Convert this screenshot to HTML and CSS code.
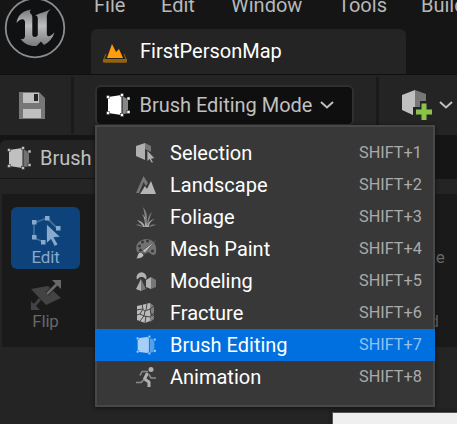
FILE: index.html
```
<!DOCTYPE html>
<html lang="en">
<head>
<meta charset="utf-8">
<title>FirstPersonMap</title>
<link rel="stylesheet" href="styles.css">
</head>
<body>
<svg width="0" height="0" class="defs">
  <defs>
    <linearGradient id="metal" x1="0" y1="0" x2="0" y2="1">
      <stop offset="0" stop-color="#77797b"/><stop offset=".45" stop-color="#bcbec0"/><stop offset="1" stop-color="#77797b"/>
    </linearGradient>
    <symbol id="brush" viewBox="0 0 24 24">
      <path d="M2 4 15.500 2v20L2 20z" fill="currentColor"/>
      <path d="M16.500 3.500 22 6v14l-5.500 1.500z" fill="currentColor" opacity=".5"/>
      <g fill="currentColor" class="knots">
        <rect x=".5" y="2.500" width="3" height="3"/><rect x="14.500" y=".5" width="3" height="3"/>
        <rect x="21" y="4" width="3" height="3"/><rect x=".5" y="18.500" width="3" height="3"/>
        <rect x="14.500" y="20.500" width="3" height="3"/><rect x="21" y="17.500" width="3" height="3"/>
      </g>
    </symbol>
    <symbol id="chevron" viewBox="0 0 14 8"><path d="m1 1 6 5.500L13 1" fill="none" stroke="currentColor" stroke-width="2"/></symbol>
  </defs>
</svg>
<div class="app">
  <header class="titlebar">
    <svg class="logo" viewBox="0 0 62 62">
      <circle cx="31" cy="31" r="29.300" fill="#101112" stroke="#8b8d8f" stroke-width="1.800"/>
      <path d="M12.500 26C13.500 18 19 14 27 12.500c-1.500 1.500-1.500 3 0 4.500 1 1 1.300 2 1.300 3.500V37c0 2 .7 3 2.500 3 1.500 0 2.500-.8 3-2V21.500c0-2-.8-2.800-2.500-3 4-2.500 9-3 15.500-6.500-3 3-4 5-4 8v16c0 2.500.8 3.500 2.200 3.200 1.800-.4 3.500-1.700 5.500-3.700-2 6-5.500 10-10.500 12.500l-3-3.500-4.500 4.500c-6.500.5-12-2-16-7 3 .5 4.500-.5 4.500-3V25.500c0-2-.7-3.300-2.500-3.300-2.200 0-4.200 1.600-6 3.800z" fill="url(#metal)"/>
    </svg>
    <div class="titlecol">
      <nav class="menubar"><span class="m-file">File</span><span class="m-edit">Edit</span><span class="m-window">Window</span><span class="m-tools">Tools</span><span class="m-build">Build</span></nav>
      <div class="maptab">
        <svg width="24" height="20" viewBox="0 0 24 20"><path d="M4 15 9 1l4 8 3-3 4 9z" fill="#ff9d0a"/><path d="M3 11 1 16v3h22v-3l-2-5" fill="none" stroke="#94620f" stroke-width="1"/><path d="M0 16h24v3.500H0z" fill="#94620f"/></svg>
        <span>FirstPersonMap</span>
      </div>
    </div>
  </header>
  <section class="toolbar">
    <svg class="save" width="26" height="27" viewBox="0 0 26 27"><path d="M0 0h20l6 6v21H0z" fill="#777"/><path d="M4 1h16v10H4zM4 17h18v9H4z" fill="#c0c0c0"/><path d="M15 2h4v7h-4z" fill="#242424"/></svg>
    <i class="rule rule-a"></i>
    <button class="mode"><svg class="white" width="24" height="24"><use href="#brush"/></svg><span>Brush Editing Mode</span><svg width="14" height="8"><use href="#chevron"/></svg></button>
    <i class="rule rule-b"></i>
    <svg class="add" width="31" height="31" viewBox="0 0 31 31"><path d="M0 5 13 0v26L0 20z" fill="#c0c0c0"/><path d="M13 0 24 4v17l-11 5z" fill="#777"/><path d="M18 11h9v6h5v9h-5v6h-9v-6h-7v-9h7z" fill="#242424"/><path d="M19.500 13.500h5v6H30v5h-5.500V30h-5v-5.500H14v-5h5.500z" fill="#8bc34a"/></svg>
    <svg class="addarrow" width="14" height="8"><use href="#chevron"/></svg>
  </section>
  <div class="paneltabs"><div class="paneltab"><svg width="24" height="24"><use href="#brush"/></svg><span>Brush</span></div></div>
  <main class="workspace">
    <div class="tools">
      <div class="tool active"><svg width="30" height="30" viewBox="0 0 30 30"><path d="M13 26 3 22V7l13-5 11 11" fill="none" stroke="#3f6e9c" stroke-width="1.800"/><path d="M1 4h4.500v4.500H1zM14 0h4.500v4.500H14zM25 10h4.500v4.500H25zM1 19h4.500v4.500H1zM10 24h4.500v4.500H10z" fill="#86a9cc"/><path d="m15.500 8 14 13-6.500.6 4 7-3.500 1.800-3.500-7-4.500 4z" fill="#86a9cc" stroke="#0e427a" stroke-width=".8"/></svg><span>Edit</span></div>
      <div class="tool far">Create</div>
      <div class="tool flip"><svg width="30" height="30" viewBox="0 0 30 30"><path d="m0 9 17-3 13 12-15 7z" fill="#434343"/><path d="m9 19-6 7" stroke="#434343" stroke-width="3"/><path d="M0 21v9h9z" fill="#434343"/><path d="M16 14 26 4" stroke="#1a1a1a" stroke-width="4"/><path d="M16 14 26 4" stroke="#686868" stroke-width="2.600"/><path d="M21 0h9v9z" fill="#686868"/></svg><span>Flip</span></div>
      <div class="tool far weld">Weld</div>
    </div>
  </main>
</div>
<div class="menu">
  <div class="item"><svg viewBox="0 0 20 20"><path d="M0 3 9 0v17l-9-4z" fill="#b0b0b0"/><path d="m9 0 6 3v6l-6-3z" fill="#777"/><path d="m11 7 8 8.500-3.500.4 2 3.600-2 .6-2-3.600-2.500 2z" fill="#b0b0b0" stroke="#383838" stroke-width=".8"/></svg><span>Selection</span><kbd>SHIFT+1</kbd></div>
  <div class="item"><svg viewBox="0 0 20 20"><path d="M0 18 7.500 1l4.500 7-2 3-2.500-4-4.500 11z" fill="#777"/><path d="m4 19 5-8 2 3 4-8 5 13z" fill="#b5b5b5"/></svg><span>Landscape</span><kbd>SHIFT+2</kbd></div>
  <div class="item"><svg viewBox="0 0 20 20"><path d="M9 20C9 13 8 10 6 7c4 3 5 7 5 13zM9 20c-1-4-4-6-8-7 3 3 5 4 6 7zM11 20c0-4 3-7 8-8-4 2-6 4-6 8z" fill="#aaa"/><path d="M9 15C9 9 8 4 7 0c4 5 5 10 3 17zM11 17c1-5 1-8 5-12-2 4-3 9-4 12zM0 18c3-1 5 0 7 2zm20 0c-4-1-6 0-7 2z" fill="#808080"/></svg><span>Foliage</span><kbd>SHIFT+3</kbd></div>
  <div class="item"><svg viewBox="0 0 20 20"><path fill-rule="evenodd" d="M1 13C-2 5 4 0 11 0c8 1 10 7 9 14-1 3-5 2-6 0-2-2-4 0-5 1zm1-6a1.500 1.500 0 1 0 3 0 1.500 1.500 0 1 0-3 0m3-4a1.500 1.500 0 1 0 3 0 1.500 1.500 0 1 0-3 0m5-1a1.500 1.500 0 1 0 3 0 1.500 1.500 0 1 0-3 0M3 11a1.300 1.300 0 1 0 3 0 1.300 1.300 0 1 0-3 0m12 1a1.500 1.500 0 1 0 3 0 1.500 1.500 0 1 0-3 0" fill="#727272"/><path d="M20.500.5 9 14l-3-2zM5 13l3 3c-2 4-5 3-8 4 2-3 1-6 5-7z" fill="#bdbdbd" stroke="#383838" stroke-width=".6"/></svg><span>Mesh Paint</span><kbd>SHIFT+4</kbd></div>
  <div class="item"><svg viewBox="0 0 20 20"><path d="M1 8.500a5 5 0 1 1 9 0L7 6H4z" fill="#b0b0b0"/><path d="m5 8-5 10 5 2zM15 6l-5 3v7l5 2z" fill="#b0b0b0"/><path d="m5 8 5 10-5 2zM15 6l5 3v7l-5 2z" fill="#777"/></svg><span>Modeling</span><kbd>SHIFT+5</kbd></div>
  <div class="item"><svg viewBox="0 0 20 20"><path d="m1 3 13-3v18l-5 2-8-3z" fill="#bbb"/><path d="m14 0 4 3v13l-4 3z" fill="#808080"/><path d="m1 7 5-1 3 2 5-2 4-3M6 1l1 5-3 5-3 1m8-4-1 5-4 5m4-5 6 1 4-4M4 11l4 2m6-7 1 5 3 2M9 20l1-7M11 1l-1 6" fill="none" stroke="#383838" stroke-width=".9"/></svg><span>Fracture</span><kbd>SHIFT+6</kbd></div>
  <div class="item selected"><svg class="blueicon" viewBox="0 0 24 24"><use href="#brush"/></svg><span>Brush Editing</span><kbd>SHIFT+7</kbd></div>
  <div class="item"><svg viewBox="0 0 20 20" fill="none" stroke-linejoin="round"><circle cx="15" cy="2.500" r="2.500" fill="#b0b0b0"/><path d="m11.500 6-3 6 4.500 3v5" stroke="#b0b0b0" stroke-width="3"/><path d="M12 4.500H6L4 8.500m9-1 2 3.500h5M8 12.500l-3 3H0" stroke="#8a8a8a" stroke-width="1.600"/></svg><span>Animation</span><kbd>SHIFT+8</kbd></div>
</div>
<div class="window"></div>
</body>
</html>
```
FILE: styles.css
```
* { box-sizing: border-box; }
body { margin: 0; width: 457px; height: 424px; overflow: hidden; position: relative; background: #242424; color: #c0c0c0; font: 20px/24px Roboto, sans-serif; }
.defs { position: absolute; }
svg { display: block; flex: none; overflow: visible; }
span { white-space: nowrap; }
.app { display: flex; flex-direction: column; height: 424px; overflow: hidden; }
.titlebar { display: flex; flex: none; height: 75px; background: #151515; border-bottom: 1px solid #101010; }
.logo { width: 62px; height: 62px; margin: -3px 0 0 3.5px; }
.titlecol { margin-left: 25.5px; width: 366px; display: flex; flex-direction: column; }
.menubar { height: 29px; display: flex; margin-top: -7px; padding-left: 3px; color: #b8b8b8; flex: none; }
.menubar span { flex: none; }
.m-file { width: 67px; }
.m-edit { width: 70px; }
.m-window { width: 107px; }
.m-tools { width: 83px; }
.maptab { margin-top: 7px; width: 315px; height: 46px; background: #242424; border-radius: 6px 6px 0 0; display: flex; align-items: center; padding-left: 12px; gap: 13px; color: #fff; }
.maptab svg { margin-top: 3px; }
.maptab span { margin-top: -1px; }
.toolbar { height: 60px; flex: none; display: flex; align-items: center; padding-left: 19px; }
.rule { width: 3px; height: 57px; background: #1a1a1a; flex: none; }
.rule-a { margin-left: 26px; }
.rule-b { margin-left: 22px; }
.mode { margin: 0 0 0 21px; width: 259px; height: 41px; padding: 0 0 0 9px; border: 2px solid #303030; border-radius: 6px; background: #0f0f0f; color: #c0c0c0; display: flex; align-items: center; font: inherit; flex: none; }
.mode span { margin-left: 9.5px; width: 173px; text-align: left; letter-spacing: -.02px; }
.mode > svg:last-child { margin-left: 7px; }
.white { color: #fff; }
.add { margin-left: 23px; }
.addarrow { margin-left: 6px; }
.knots { stroke: var(--knot, #222); stroke-width: .5px; }
.paneltabs { height: 44px; flex: none; background: #151515; padding-top: 5px; border-bottom: 1px solid #151515; }
.paneltab { width: 300px; height: 38px; border-radius: 6px 0 0; background: #242424; display: flex; align-items: center; padding: 0 0 2px 7px; gap: 9px; }
.workspace { padding: 15px 0 0 2px; }
.tools { background: #1a1a1a; height: 153px; padding: 13px 9px; display: grid; grid-template-columns: 69px 70px; column-gap: 305px; grid-template-rows: 62px 65px; font-size: 17px; line-height: 20px; color: #686868; }
.tool { display: flex; flex-direction: column; align-items: center; padding-top: 9px; gap: 1px; }
.tool span { letter-spacing: -.2px; }
.active { background: #0e427a; color: #88a9ca; border-radius: 6px; }
.far { padding-top: 40px; }
.flip { padding-top: 11px; }
.weld { padding-top: 42px; }
.menu { position: absolute; left: 95px; top: 125px; width: 340px; height: 282px; padding-top: 10px; border: 2px solid #484848; background: #383838; box-shadow: 0 1px 4px #111; }
.item { height: 32px; display: flex; align-items: center; padding: 0 11px 0 39px; color: #fff; }
.item svg { width: 20px; height: 20px; margin-right: 14px; }
.item kbd { margin-left: auto; width: 63px; font: 16.3px/22px Roboto, sans-serif; color: #aaa; white-space: nowrap; }
.item.selected { background: #0070e0; margin: 0 -2px; padding: 0 13px 0 41px; }
.item .blueicon { color: #a6cef6; --knot: #0070e0; }
.item.selected kbd { color: #93c1f1; }
.window { position: absolute; left: 332px; top: 412px; width: 125px; height: 12px; background: #efefef; border: 1px solid #555; border-width: 1px 0 0 1px; box-shadow: 0 0 4px #111; }
```
